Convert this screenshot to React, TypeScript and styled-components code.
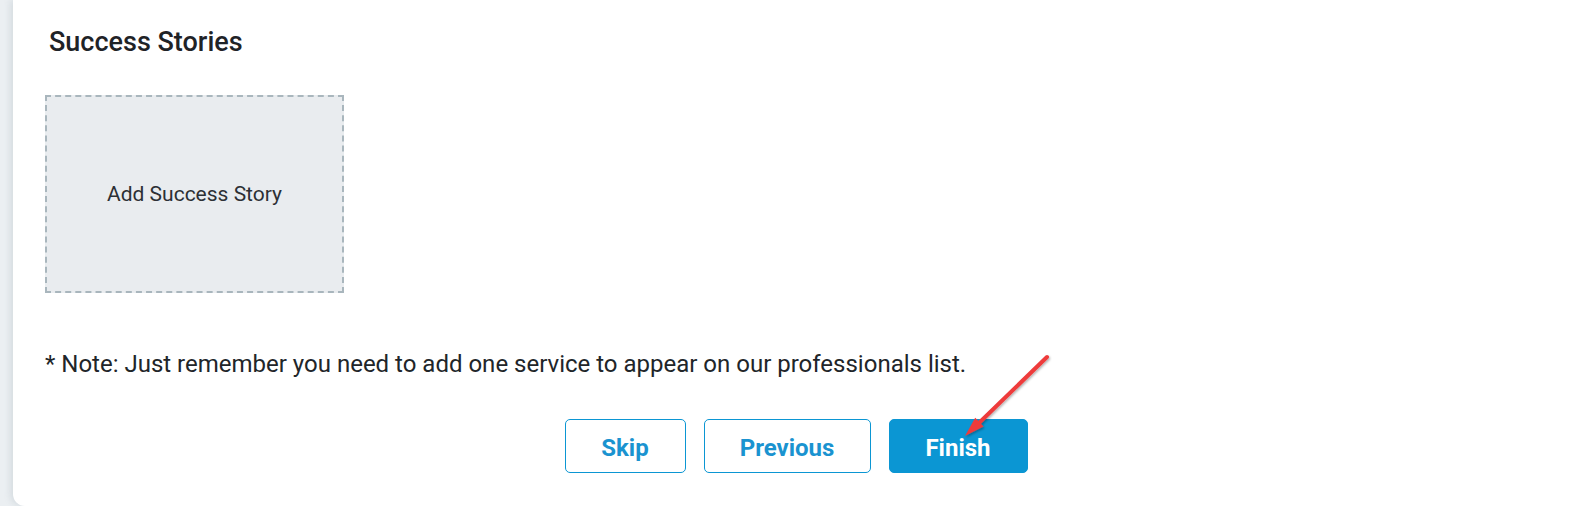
import React from "react";
import styled, { createGlobalStyle } from "styled-components";

const Global = createGlobalStyle`
  html, body { margin: 0; padding: 0; }
  body {
    background: #ebeff2;
    font-family: Roboto, "Liberation Sans", Arial, sans-serif;
    width: 1575px;
    height: 506px;
    overflow: hidden;
  }
`;

const Page = styled.div`
  display: flex;
  height: 506px;
  padding-left: 13px;
  box-sizing: border-box;
`;

const Card = styled.section`
  position: relative;
  flex: 1;
  background: #ffffff;
  border-bottom-left-radius: 12px;
  box-shadow: -3px 0 6px rgba(120, 140, 150, 0.18);
  padding: 26px 32px 0 32px;
  box-sizing: border-box;
  display: flex;
  flex-direction: column;
`;

const Title = styled.h2`
  margin: 0 0 0 4px;
  font-size: 27px;
  font-weight: 500;
  color: #1f2327;
  line-height: 32px;
`;

const AddBox = styled.button`
  margin-top: 37px;
  width: 299px;
  height: 198px;
  box-sizing: border-box;
  background: #e9ecef;
  border: 2px dashed #a9b6bd;
  font-family: inherit;
  font-size: 21px;
  color: #2c3035;
  display: flex;
  align-items: center;
  justify-content: center;
  padding: 0;
  cursor: pointer;
`;

const Note = styled.p`
  margin: 57px 0 0 0;
  font-size: 24px;
  line-height: 28px;
  color: #212529;
`;

const Actions = styled.div`
  display: flex;
  justify-content: center;
  gap: 18px;
  margin-top: 41px;
  padding-left: 4px;
`;

const Btn = styled.button<{ $primary?: boolean; $w: number }>`
  width: ${(p) => p.$w}px;
  height: 54px;
  box-sizing: border-box;
  border-radius: 5px;
  border: 1px solid #0b96d3;
  background: ${(p) => (p.$primary ? "#0b96d3" : "#ffffff")};
  color: ${(p) => (p.$primary ? "#ffffff" : "#1a93d0")};
  font-family: inherit;
  font-size: 24px;
  font-weight: 700;
  cursor: pointer;
  padding: 3px 0 0 0;
`;

const Arrow = styled.svg`
  position: absolute;
  left: 930px;
  top: 345px;
  pointer-events: none;
`;

export default function App() {
  return (
    <>
      <Global />
      <Page>
        <Card>
          <Title>Success Stories</Title>
          <AddBox>Add Success Story</AddBox>
          <Note>* Note: Just remember you need to add one service to appear on our professionals list.</Note>
          <Actions>
            <Btn $w={121}>Skip</Btn>
            <Btn $w={167}>Previous</Btn>
            <Btn $w={139} $primary>Finish</Btn>
          </Actions>
          <Arrow width="120" height="100" viewBox="0 0 120 100">
            <defs>
              <filter id="sh" x="-20%" y="-20%" width="140%" height="140%">
                <feDropShadow dx="1" dy="1.5" stdDeviation="1.2" floodColor="#000" floodOpacity="0.3" />
              </filter>
            </defs>
            <g filter="url(#sh)">
              <line x1="104" y1="12" x2="37" y2="77" stroke="#ee3b3b" strokeWidth="4" strokeLinecap="round" />
              <polygon points="22,91 32.2,72.7 40.6,81.4" fill="#ee3b3b" />
            </g>
          </Arrow>
        </Card>
      </Page>
    </>
  );
}
